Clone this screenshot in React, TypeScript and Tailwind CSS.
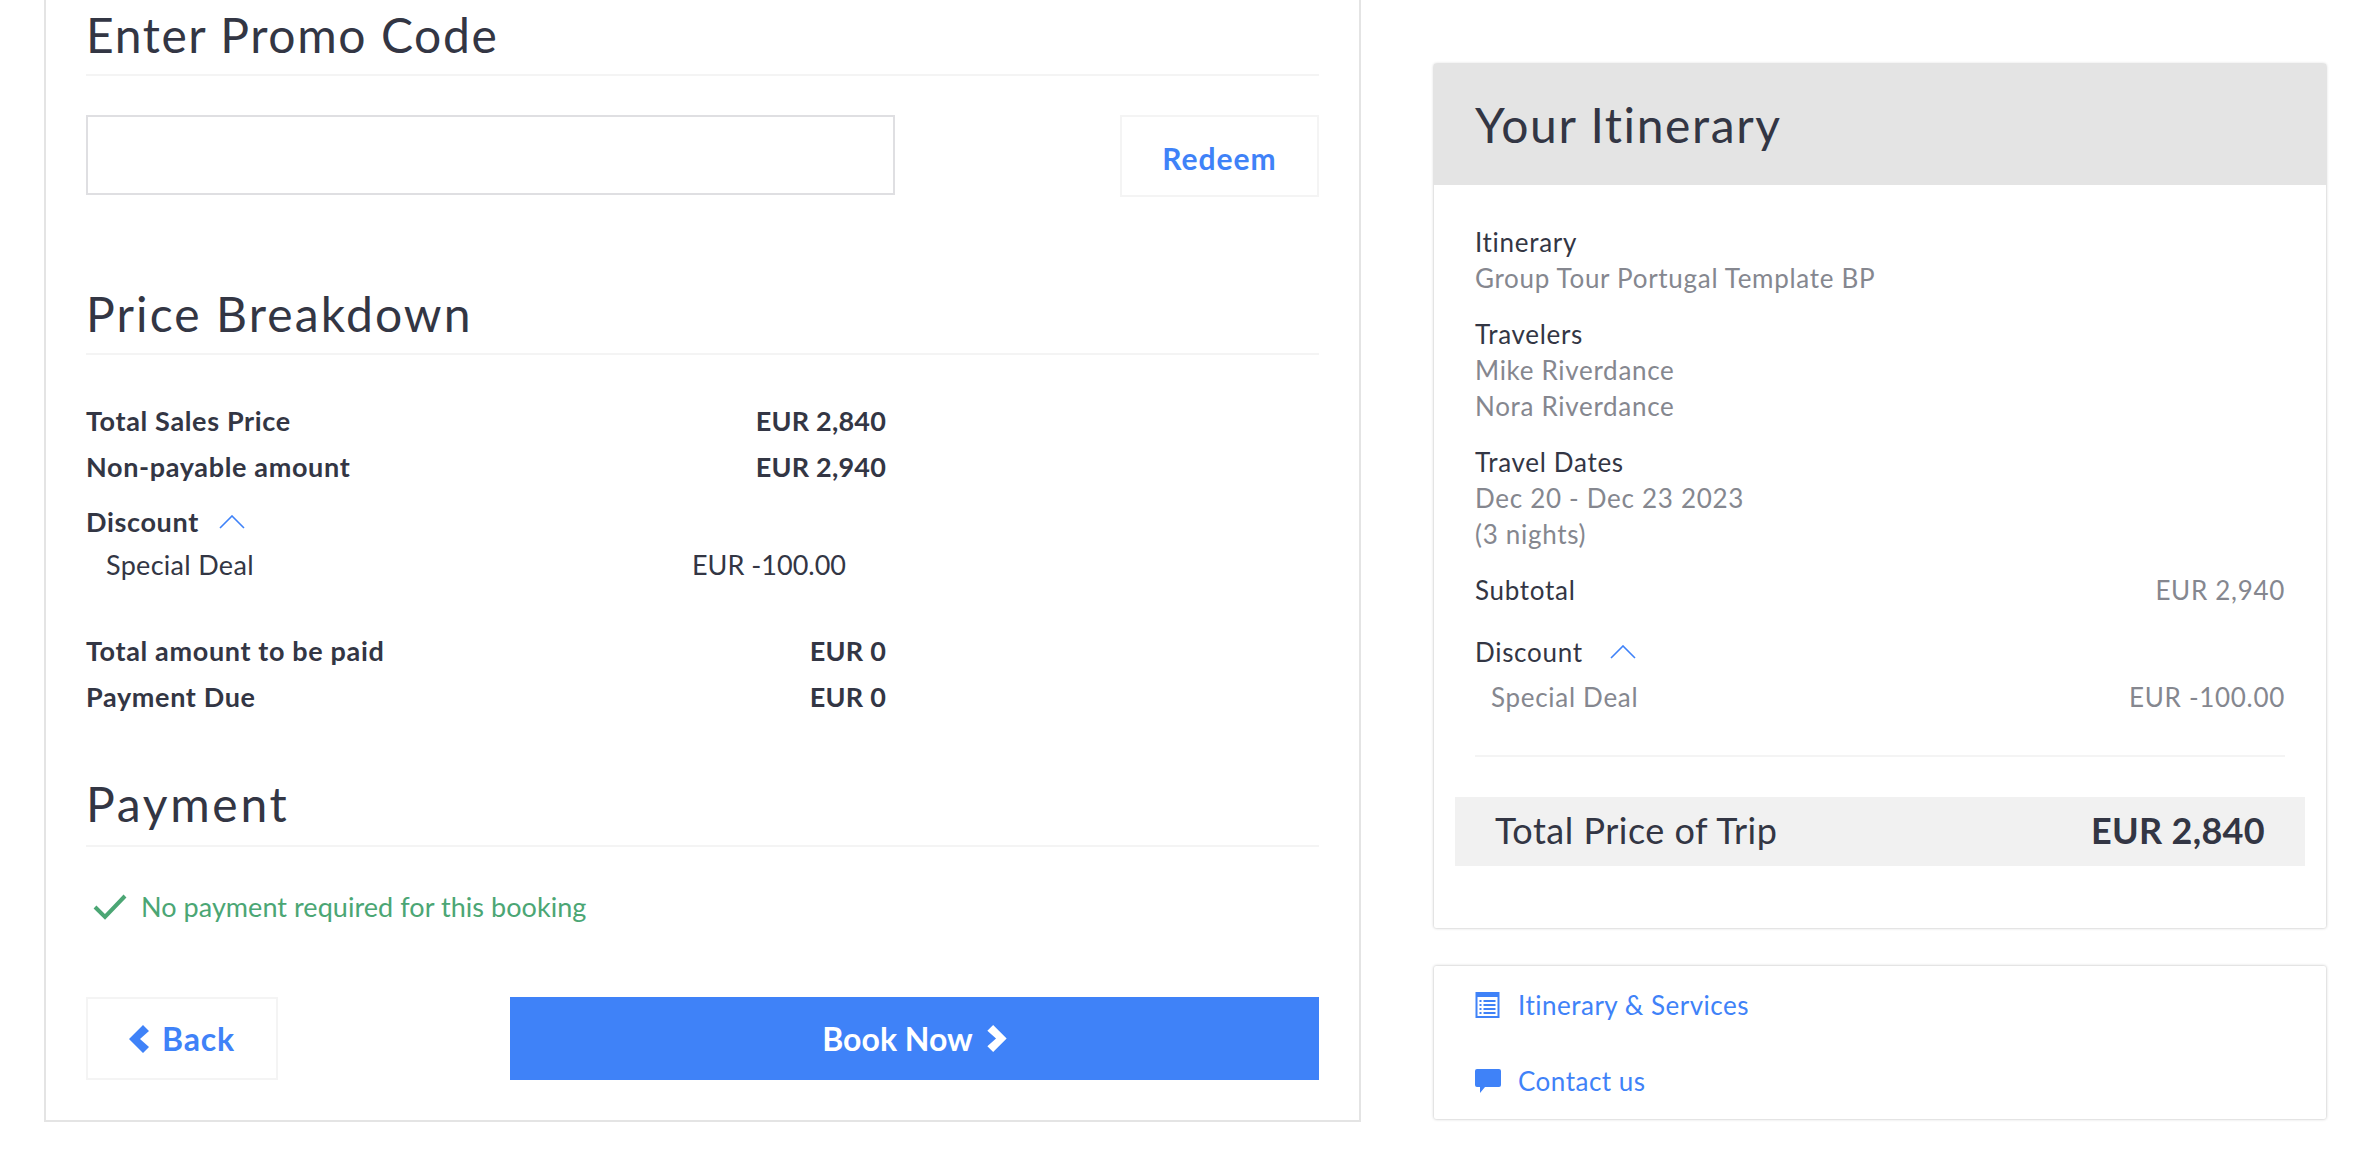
const BLUE = '#3f82f8';

const Heading = ({ children, className }: { children: string; className: string }) => (
    <div className={`border-b-2 border-[#f4f4f4] ${className}`}>
        <h2 className="text-[48px] leading-[48px] font-normal text-[#333644]">{children}</h2>
    </div>
);

const PriceRow = ({ label, value, className = '' }: { label: string; value: string; className?: string }) => (
    <div className={`flex w-[800px] justify-between text-[27px] leading-[36px] font-bold text-[#333644] ${className}`}>
        <span className="tracking-[0.65px]">{label}</span>
        <span className="tracking-[0.2px]">{value}</span>
    </div>
);

const ChevronUp = ({ className }: { className: string }) => (
    <svg viewBox="0 0 26 14" className={className} fill="none" stroke={BLUE} strokeWidth="1.6">
        <path d="M1 13 L13 1 L25 13" />
    </svg>
);

const Detail = ({ title, lines, className }: { title: string; lines: string[]; className: string }) => (
    <div className={`text-[26px] leading-[36px] tracking-[0.7px] ${className}`}>
        <div className="text-[#333644]">{title}</div>
        {lines.map(line => (
            <div key={line} className="text-[#85878f]">{line}</div>
        ))}
    </div>
);

export default function App() {
    return (
        <div className="flex h-[1164px] overflow-hidden bg-white pl-[44px] font-['Lato','Open_Sans',sans-serif]">
            {/* Booking panel */}
            <div className="h-[1122px] w-[1317px] shrink-0 border-2 border-t-0 border-[#e4e4e4] px-[40px]">
                <Heading className="h-[76px] pt-[11px] tracking-[1.6px]">Enter Promo Code</Heading>

                <div className="mt-[39px] flex items-start justify-between">
                    <input className="h-[80px] w-[809px] border-2 border-[#dfdfe2] bg-white" />
                    <button className="h-[82px] w-[199px] border-2 border-[#f4f4f4] pt-[4px] text-[30px] font-bold tracking-[1px] text-[#3f82f8]">Redeem</button>
                </div>

                <Heading className="mt-[66px] h-[92px] pt-[27px] tracking-[2.1px]">Price Breakdown</Heading>

                <PriceRow className="mt-[48px]" label="Total Sales Price" value="EUR 2,840" />
                <PriceRow className="mt-[10px]" label="Non-payable amount" value="EUR 2,940" />

                <div className="mt-[19px] flex items-center text-[27px] leading-[36px] font-bold tracking-[0.65px] text-[#333644]">
                    <span>Discount</span>
                    <ChevronUp className="ml-[20px] h-[14px] w-[26px]" />
                </div>
                <div className="mt-[7px] flex w-[760px] justify-between pl-[20px] text-[27px] leading-[36px] text-[#333644]">
                    <span className="tracking-[0.3px]">Special Deal</span>
                    <span>EUR -100.00</span>
                </div>

                <PriceRow className="mt-[50px]" label="Total amount to be paid" value="EUR 0" />
                <PriceRow className="mt-[10px]" label="Payment Due" value="EUR 0" />

                <Heading className="mt-[53px] h-[79px] pt-[12px] tracking-[2.7px]">Payment</Heading>

                <div className="mt-[42px] flex items-center pl-[7px] text-[27px] leading-[36px] tracking-[0.05px] text-[#4ba674]">
                    <svg viewBox="0 0 34 26" className="mr-[14px] h-[26px] w-[34px]" fill="none" stroke="#4ba674" strokeWidth="4">
                        <path d="M2 13 L12 23 L32 2" />
                    </svg>
                    <span>No payment required for this booking</span>
                </div>

                <div className="mt-[72px] flex justify-between">
                    <button className="flex h-[83px] w-[192px] items-center justify-center gap-[13px] border-2 border-[#f4f4f4] text-[32px] font-bold tracking-[0.8px] text-[#3f82f8]">
                        <svg viewBox="0 0 20 28" className="h-[28px] w-[20px]" fill={BLUE}>
                            <path d="M14 0 L20 6 L11 14 L20 22 L14 28 L0 14 Z" />
                        </svg>
                        Back
                    </button>
                    <button className="flex h-[83px] w-[809px] items-center justify-center gap-[14px] bg-[#3f82f8] text-[32px] font-bold text-white">
                        Book Now
                        <svg viewBox="0 0 20 28" className="h-[27px] w-[20px]" fill="#ffffff">
                            <path d="M6 0 L0 6 L9 14 L0 22 L6 28 L20 14 Z" />
                        </svg>
                    </button>
                </div>
            </div>

            {/* Sidebar */}
            <div className="ml-[73px] w-[892px] shrink-0 pt-[64px]">
                <div className="h-[864px] rounded-[2px] bg-white shadow-[0_0_3px_rgba(0,0,0,0.3)]">
                    <div className="flex h-[121px] items-center bg-[#e4e4e4] px-[41px] text-[48px] tracking-[1.6px] text-[#333644]">Your Itinerary</div>
                    <div className="px-[41px]">
                        <Detail className="mt-[39px]" title="Itinerary" lines={['Group Tour Portugal Template BP']} />
                        <Detail className="mt-[20px]" title="Travelers" lines={['Mike Riverdance', 'Nora Riverdance']} />
                        <Detail className="mt-[20px]" title="Travel Dates" lines={['Dec 20 - Dec 23 2023', '(3 nights)']} />
                        <div className="mt-[20px] flex justify-between text-[26px] leading-[36px] tracking-[0.7px]">
                            <span className="text-[#333644]">Subtotal</span>
                            <span className="text-[#85878f]">EUR 2,940</span>
                        </div>
                        <div className="mt-[26px] flex items-center text-[26px] leading-[36px] tracking-[0.7px] text-[#333644]">
                            <span>Discount</span>
                            <ChevronUp className="ml-[27px] h-[14px] w-[26px]" />
                        </div>
                        <div className="mt-[9px] flex justify-between border-b-2 border-[#f4f4f4] pb-[40px] pl-[16px] text-[26px] leading-[36px] tracking-[0.7px] text-[#85878f]">
                            <span>Special Deal</span>
                            <span>EUR -100.00</span>
                        </div>
                    </div>
                    <div className="mx-[21px] mt-[40px] flex h-[69px] items-center justify-between bg-[#f1f1f1] px-[40px] pb-[3px] text-[#333644]">
                        <span className="text-[36px] tracking-[0.5px]">Total Price of Trip</span>
                        <span className="text-[36px] font-bold tracking-[0.3px]">EUR 2,840</span>
                    </div>
                </div>

                <div className="mt-[38px] h-[153px] rounded-[2px] bg-white px-[41px] pt-[21px] text-[26px] leading-[36px] tracking-[0.5px] text-[#3f82f8] shadow-[0_0_3px_rgba(0,0,0,0.3)]">
                    <div className="flex items-center">
                        <svg viewBox="0 0 24 26" className="mr-[18px] h-[26px] w-[25px]" fill={BLUE}>
                            <path fillRule="evenodd" d="M0 0 H24 V26 H0 Z M2 5 V24 H22 V5 Z" />
                            <path d="M4 8 H6 V10 H4 Z M8 8 H20 V10 H8 Z M4 12 H6 V14 H4 Z M8 12 H20 V14 H8 Z M4 16 H6 V18 H4 Z M8 16 H20 V18 H8 Z M4 20 H6 V22 H4 Z M8 20 H20 V22 H8 Z" />
                        </svg>
                        <span>Itinerary &amp; Services</span>
                    </div>
                    <div className="mt-[40px] flex items-center">
                        <svg viewBox="0 0 26 24" className="mr-[17px] h-[24px] w-[26px]" fill={BLUE}>
                            <path d="M2 0 H24 Q26 0 26 2 V16 Q26 18 24 18 H10 L5 24 V18 H2 Q0 18 0 16 V2 Q0 0 2 0 Z" />
                        </svg>
                        <span>Contact us</span>
                    </div>
                </div>
            </div>
        </div>
    );
}
